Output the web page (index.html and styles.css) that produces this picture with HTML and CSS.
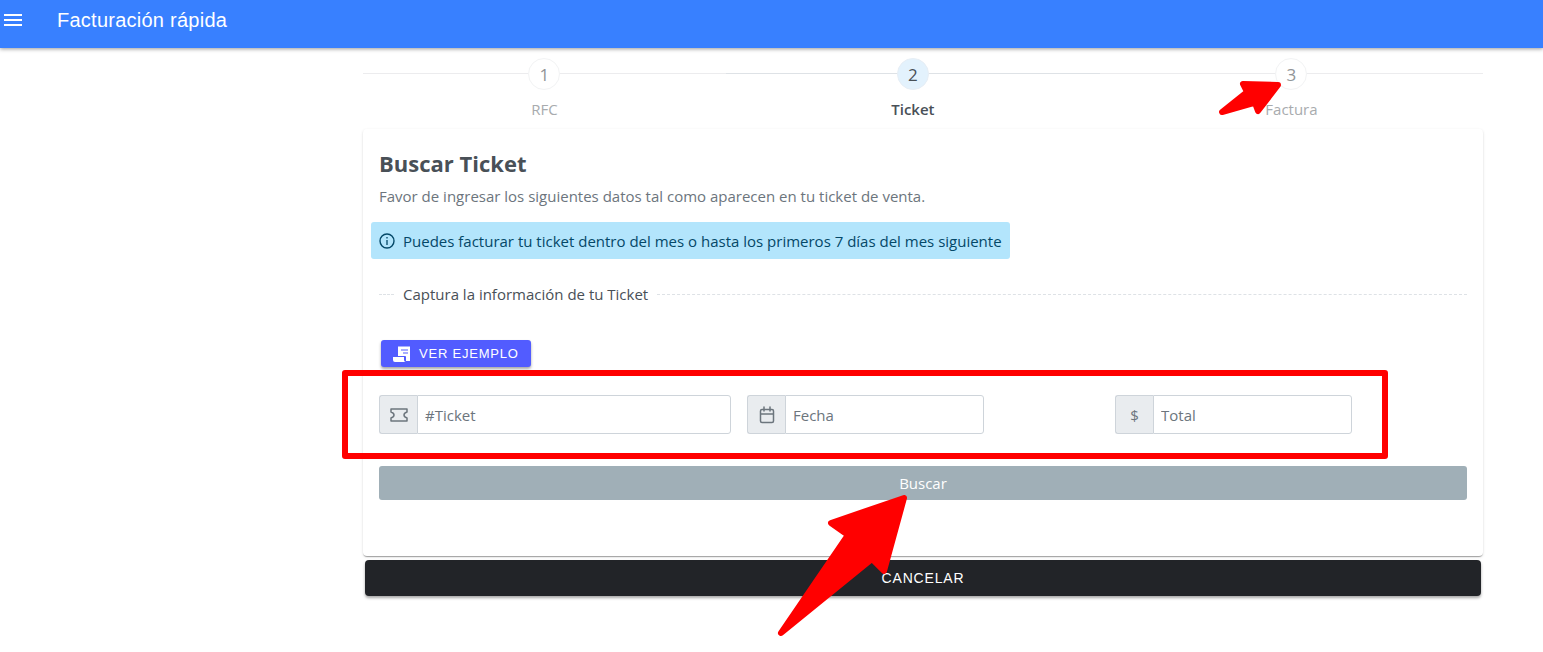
FILE: index.html
```
<!DOCTYPE html>
<html lang="es">
<head>
    <meta charset="UTF-8">
    <meta name="viewport" content="width=device-width, initial-scale=1">
    <title>Facturación rápida</title>
    <link rel="stylesheet" href="styles.css">
</head>
<body>
    <header class="toolbar">
        <button class="menu-button" type="button" aria-label="Menú">
            <svg width="18" height="12" viewBox="0 0 18 12"><path d="M0 0h18v2H0zM0 5h18v2H0zM0 10h18v2H0z" fill="currentColor"/></svg>
        </button>
        <h1 class="toolbar-title">Facturación rápida</h1>
    </header>

    <main class="content">
        <ol class="steps">
            <li class="step">
                <span class="step-number">1</span>
                <span class="step-title">RFC</span>
            </li>
            <li class="step active">
                <span class="step-number">2</span>
                <span class="step-title">Ticket</span>
            </li>
            <li class="step">
                <span class="step-number">3</span>
                <span class="step-title">Factura</span>
                <svg class="arrow-small" width="66" height="38" viewBox="0 0 66 38">
                    <path d="M26 5L61 6L41 32L38 24L33 25L5 33L30 13Z"/>
                </svg>
            </li>
        </ol>

        <section class="card">
            <h2 class="card-title">Buscar Ticket</h2>
            <p class="card-subtitle">Favor de ingresar los siguientes datos tal como aparecen en tu ticket de venta.</p>

            <div class="message">
                <svg width="16" height="16" viewBox="0 0 16 16" fill="none" stroke="currentColor"><circle cx="8" cy="8" r="7" stroke-width="1.4"/><path d="M8 7v5M8 4v1.5" stroke-width="1.3"/></svg>
                <span>Puedes facturar tu ticket dentro del mes o hasta los primeros 7 días del mes siguiente</span>
            </div>

            <div class="divider"><span>Captura la información de tu Ticket</span></div>

            <button class="btn-example" type="button">
                <svg width="18" height="18" viewBox="0 0 18 18"><path d="M5 1l1 1 1-1 1 1 1-1 1 1 1-1 1 1 1-1 1 1 1-1 1 1 1-1v15H13v-4q0-1-1-1H5z" fill="#fff"/><path d="M8 5h7M10 8h5" stroke="#525cff" stroke-width="1.2"/><path d="M0 12h11v3q0 2 2 2H2q-2 0-2-2z" fill="#fff"/></svg>
                VER EJEMPLO
            </button>

            <form class="fields">
                <div class="input-group">
                    <label class="addon" for="ticket" aria-label="Ticket">
                        <svg width="18" height="14" viewBox="0 0 18 14" fill="none" stroke="currentColor" stroke-width="1.5" stroke-linejoin="round"><path d="M1 1h16v3q-3 1-3 3t3 3v3H1v-3q3-1 3-3T1 4z"/></svg>
                    </label>
                    <input id="ticket" type="text" placeholder="#Ticket">
                </div>
                <div class="input-group short">
                    <label class="addon" for="fecha" aria-label="Fecha">
                        <svg width="16" height="18" viewBox="0 0 16 18" fill="none" stroke="currentColor" stroke-width="1.5" stroke-linecap="round"><rect x="1.500" y="3.500" width="13" height="13" rx="1.500"/><path d="M2 8h12M5 1v4M11 1v4"/></svg>
                    </label>
                    <input id="fecha" type="text" placeholder="Fecha">
                </div>
                <div class="input-group short">
                    <label class="addon" for="total" aria-label="Total">$</label>
                    <input id="total" type="text" placeholder="Total">
                </div>
                <div class="highlight"></div>
            </form>

            <div class="search">
                <button class="btn-search" type="button">Buscar</button>
                <svg class="arrow-big" width="134" height="148" viewBox="0 0 134 148">
                    <path d="M129 6L56 31L73 43L6 141L97 67L109 79Z"/>
                </svg>
            </div>
        </section>

        <button class="btn-cancel" type="button">CANCELAR</button>
    </main>
</body>
</html>
```
FILE: styles.css
```
* {
    box-sizing: border-box;
}
body {
    margin: 0;
    min-height: 100vh;
    background: #fff;
    color: #495057;
    font-family: 'Open Sans', 'Noto Sans', sans-serif;
    font-size: 15px;
    line-height: 20px;
}
button {
    border: none;
    cursor: pointer;
}
.toolbar {
    display: flex;
    align-items: center;
    height: 48px;
    padding: 0 4px 8px;
    background: #3880ff;
    color: #fff;
    box-shadow: 0 1px 4px rgba(0,0,0,0.4);
}
.menu-button {
    display: flex;
    padding: 0;
    background: none;
    color: inherit;
}
.toolbar-title {
    margin: 0 0 0 35px;
    font-family: 'Liberation Sans', Arial, sans-serif;
    font-size: 20px;
    font-weight: 500;
    letter-spacing: 0.0125em;
}
.content {
    padding: 10px 60px 48px 363px;
}

/* steps */
.steps {
    display: flex;
    margin: 0;
    padding: 0;
    list-style: none;
}
.step {
    position: relative;
    flex: 1 1 auto;
    display: flex;
    flex-direction: column;
    align-items: center;
    height: 71px;
    color: #a8abae;
}
.step::before {
    content: '';
    position: absolute;
    top: 15px;
    left: 0;
    width: 100%;
    border-top: 1px solid #ececee;
}
.step-number {
    position: relative;
    width: 32px;
    height: 32px;
    border: 1px solid #f2f3f4;
    border-radius: 50%;
    background: #fff;
    color: #919497;
    font-size: 17px;
    line-height: 32px;
    text-align: center;
}
.step-title {
    margin-top: 9px;
}
.step.active::before {
    border-color: #dee2e6;
}
.step.active .step-number {
    background: #e3f2fd;
    border-color: #e7eef5;
    color: #495057;
}
.step.active .step-title {
    color: #495057;
    font-weight: 600;
}

/* card */
.card {
    padding: 20px 16px 56px;
    border-radius: 4px;
    box-shadow: 0 2px 1px -1px rgba(0,0,0,0.2), 0 1px 1px 0 rgba(0,0,0,0.14), 0 1px 3px 0 rgba(0,0,0,0.12);
}
.card-title {
    margin: 0;
    font-size: 22px;
    font-weight: 700;
    line-height: 28px;
}
.card-subtitle {
    margin: 9px 0 16px;
    color: #6c757d;
}
.message {
    display: inline-flex;
    align-items: center;
    gap: 8px;
    margin-left: -8px;
    padding: 8px;
    height: 37px;
    border-radius: 3px;
    background: #b3e5fc;
    color: #044868;
    vertical-align: top;
}
.divider {
    display: flex;
    align-items: center;
    margin: 25px 0 36px;
}
.divider span {
    padding: 0 9px;
}
.divider::before,
.divider::after {
    content: '';
    border-top: 1px dashed #dee2e6;
}
.divider::before {
    width: 15px;
}
.divider::after {
    flex: 1;
}
.btn-example,
.btn-cancel {
    background: #222428;
    color: #fff;
    font-family: 'Liberation Sans', Arial, sans-serif;
    font-size: 14px;
    font-weight: 500;
    letter-spacing: 0.06em;
    box-shadow: 0 2px 3px rgba(0,0,0,0.35);
}
.btn-example {
    display: flex;
    align-items: center;
    gap: 8px;
    height: 27px;
    margin: 0 2px;
    padding: 0 12px;
    border-radius: 3px;
    background: #525cff;
    font-size: 13px;
}
.fields {
    position: relative;
    display: grid;
    grid-template-columns: repeat(3, 1fr);
    gap: 16px;
    margin: 28px 0 32px;
}
.input-group {
    display: flex;
    height: 39px;
}
.input-group.short {
    width: 237px;
}
.addon {
    display: flex;
    align-items: center;
    justify-content: center;
    flex: none;
    width: 38px;
    border: 1px solid #ced4da;
    border-right: none;
    border-radius: 3px 0 0 3px;
    background: #e9ecef;
    color: #6c757d;
}
.input-group input {
    flex: 1;
    min-width: 0;
    padding: 0 7px;
    border: 1px solid #ced4da;
    border-radius: 0 3px 3px 0;
    color: #495057;
    font: inherit;
}
.input-group input::placeholder {
    color: #6c757d;
    opacity: 1;
}
.btn-search {
    display: block;
    width: 100%;
    height: 34px;
    border-radius: 3px;
    background: #a0afb7;
    color: #fff;
    font: inherit;
}
.btn-cancel {
    display: block;
    width: calc(100% - 4px);
    height: 36px;
    margin: 4px 2px;
    border-radius: 4px;
}

/* red marks over the form */
.highlight {
    position: absolute;
    top: -25px;
    left: -37px;
    right: 79px;
    bottom: -25px;
    border: 6px solid #f00;
    border-radius: 3px;
    pointer-events: none;
}
.search {
    position: relative;
}
.arrow-big,
.arrow-small {
    position: absolute;
    z-index: 1;
    fill: #f00;
    stroke: #f00;
    stroke-width: 6px;
    stroke-linejoin: round;
    pointer-events: none;
}
.arrow-big {
    top: 26px;
    right: calc(50% + 14px);
}
.arrow-small {
    top: 21px;
    right: calc(50% + 8px);
}
```
